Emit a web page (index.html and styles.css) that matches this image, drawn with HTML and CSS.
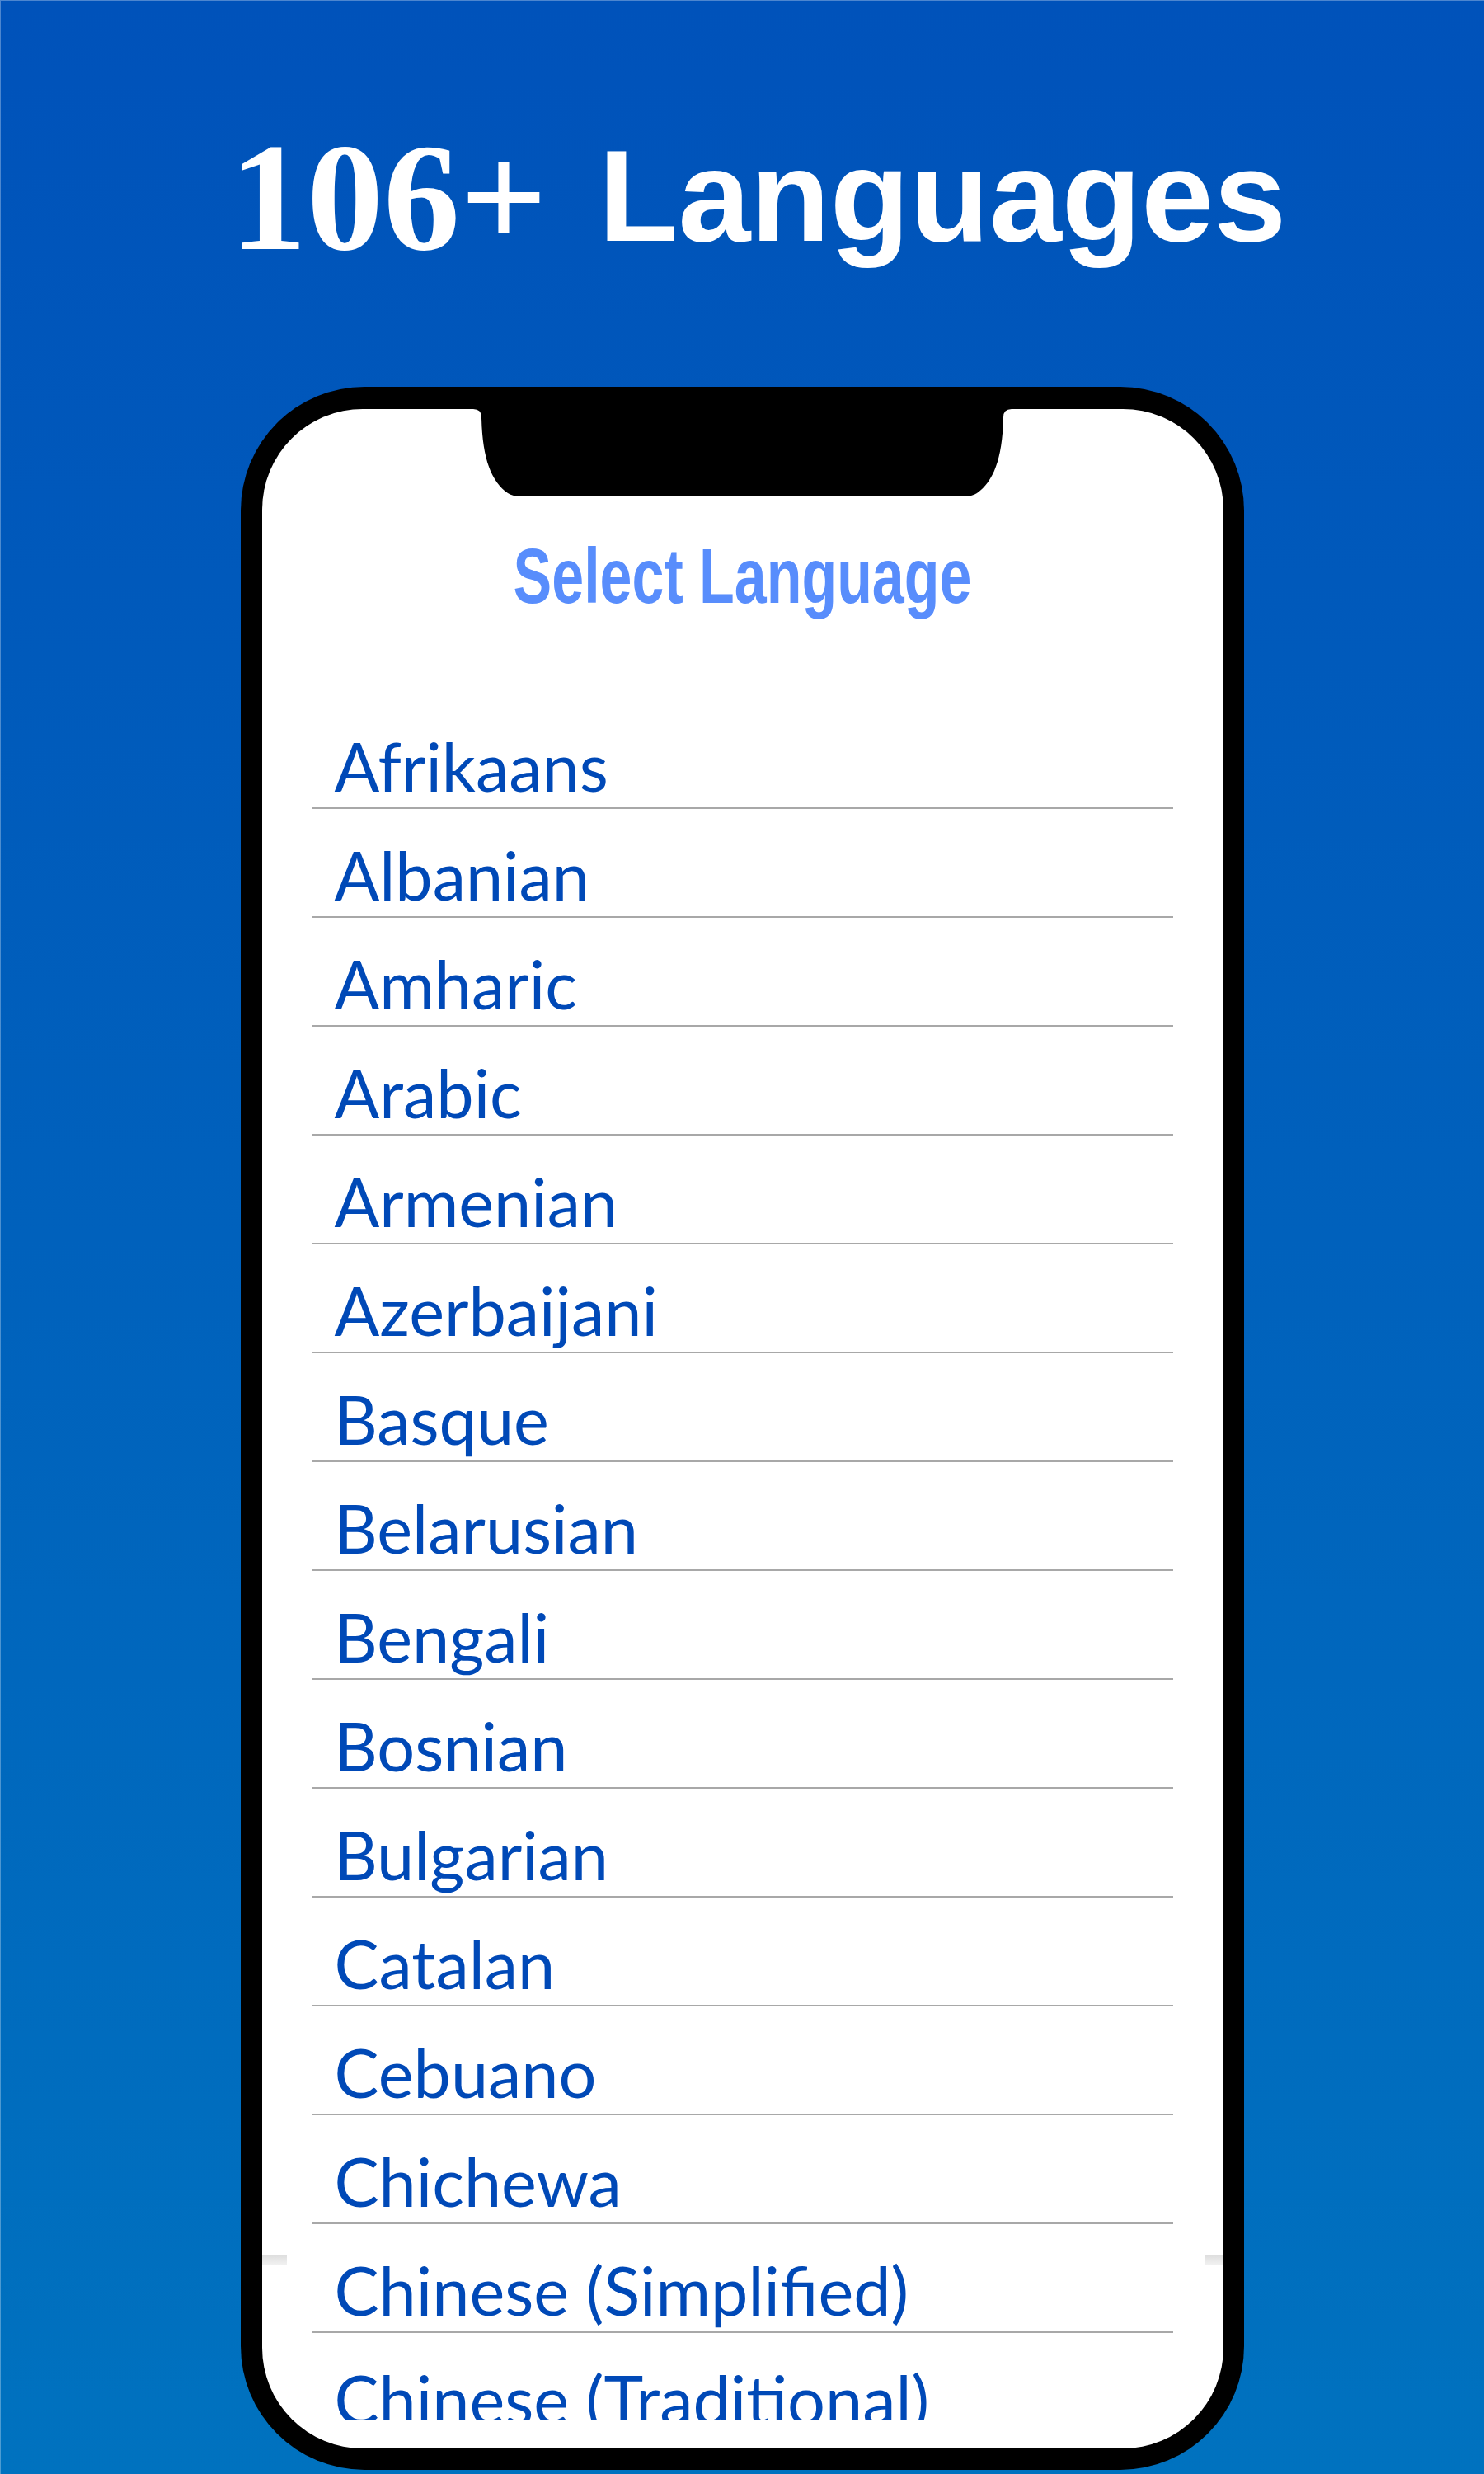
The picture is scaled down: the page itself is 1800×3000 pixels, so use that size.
FILE: index.html
```html
<!DOCTYPE html>
<html lang="en">
<head>
<meta charset="utf-8">
<title>106+ Languages</title>
<link rel="stylesheet" href="styles.css">
</head>
<body>
<div class="page">
  <header class="hero">
    <h1 class="title"><span class="num">106+</span><span class="word">Languages</span></h1>
  </header>
  <div class="phone">
    <div class="screen">
      <svg class="notch" viewBox="0 0 1166 110" width="1166" height="110" aria-hidden="true">
        <path d="M250 0 L256 0 Q266 0 266 10 C267 60 278 88 298 102 Q304 106 314 106 L851 106 Q861 106 867 102 C887 88 898 60 899 10 Q899 0 909 0 L915 0 Z" fill="#000"/>
      </svg>
      <div class="heading"><span class="heading-text">Select Language</span></div>
      <ul class="lang-list">
        <li class="lang">Afrikaans</li>
        <li class="lang">Albanian</li>
        <li class="lang">Amharic</li>
        <li class="lang">Arabic</li>
        <li class="lang">Armenian</li>
        <li class="lang">Azerbaijani</li>
        <li class="lang">Basque</li>
        <li class="lang">Belarusian</li>
        <li class="lang">Bengali</li>
        <li class="lang">Bosnian</li>
        <li class="lang">Bulgarian</li>
        <li class="lang">Catalan</li>
        <li class="lang">Cebuano</li>
        <li class="lang">Chichewa</li>
        <li class="lang">Chinese (Simplified)</li>
        <li class="lang">Chinese (Traditional)</li>
      </ul>
      <div class="edge-shade edge-left"></div>
      <div class="edge-shade edge-right"></div>
    </div>
  </div>
</div>
</body>
</html>
```
FILE: styles.css
```css
html, body {
  margin: 0;
  padding: 0;
}
body {
  width: 1800px;
  height: 3000px;
  overflow: hidden;
}
.page {
  width: 1800px;
  height: 3000px;
  background: linear-gradient(180deg, #0052ba 0%, #0061bc 50%, #0072bf 100%);
  box-shadow: inset 1px 1px 0 rgba(255, 255, 255, 0.3);
}
.hero {
  height: 469px;
  box-sizing: border-box;
  padding-top: 146px;
}
.title {
  margin: 0;
  padding-left: 39px;
  text-align: center;
  color: #fff;
  font-family: "Liberation Serif", "Times New Roman", serif;
  font-weight: 700;
  font-size: 186px;
  line-height: 186px;
  white-space: nowrap;
}
.word {
  font-family: "Liberation Sans", Arial, sans-serif;
  font-size: 158px;
  line-height: 1;
  vertical-align: 10px;
  margin-left: 62px;
}
.phone {
  width: 1217px;
  height: 2526px;
  margin: 0 auto;
  box-sizing: border-box;
  padding: 27px 25px 26px 26px;
  background: #000;
  border-radius: 150px;
}
.screen {
  position: relative;
  height: 100%;
  background: #fff;
  border-radius: 122px;
  overflow: hidden;
}
.notch {
  position: absolute;
  left: 0;
  top: 0;
  display: block;
}
.heading {
  height: 353px;
  box-sizing: border-box;
  padding-top: 153px;
  text-align: center;
  font-family: "Liberation Sans", Arial, sans-serif;
  font-weight: 700;
  font-size: 94px;
  line-height: 100px;
  color: #588dfc;
}
.heading-text {
  display: inline-block;
  transform: scaleX(0.744);
  white-space: nowrap;
}
.lang-list {
  list-style: none;
  margin: 0 61px;
  padding: 0;
  height: 2085px;
  overflow: hidden;
}
.lang {
  height: 132px;
  box-sizing: border-box;
  border-bottom: 2px solid #a8a8a8;
  padding: 31px 0 0 27px;
  font-family: Lato, "Open Sans", sans-serif;
  font-weight: 400;
  font-size: 81px;
  line-height: 97px;
  color: #0049b7;
  white-space: nowrap;
}
.edge-shade {
  position: absolute;
  top: 2239px;
  height: 12px;
  background: linear-gradient(180deg, #dedede, #f3f3f3);
}
.edge-left {
  left: 0;
  width: 30px;
}
.edge-right {
  right: 0;
  width: 22px;
}
```
